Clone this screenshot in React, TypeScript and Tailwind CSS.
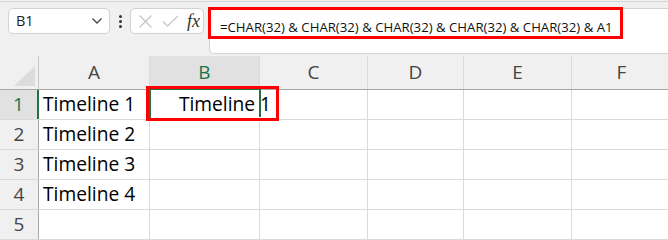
import React from "react";

const cols = ["A", "B", "C", "D", "E", "F"];
const widths = [111, 110, 108, 96, 108, 100];
const data: Record<string, string> = {
  A1: "Timeline 1",
  A2: "Timeline 2",
  A3: "Timeline 3",
  A4: "Timeline 4",
  B1: "     Timeline 1",
};

export default function App() {
  const font = { fontFamily: '"Open Sans", "Noto Sans", sans-serif' };
  return (
    <div
      className="relative w-[668px] h-[240px] overflow-hidden bg-[#f0f0f0]"
      style={font}
    >
      {/* toolbar */}
      <div className="h-[55px] border-t border-[#d6d6d6] mt-[1px] flex items-start pt-[6px] pl-[8px]">
        <div className="w-[102px] h-[26px] rounded-[5px] border border-[#d2d2d2] bg-white flex items-center justify-between pl-[7px] pr-[6px]">
          <span className="text-[14.5px] text-[#222]">B1</span>
          <svg width="12" height="8" viewBox="0 0 12 8">
            <path d="M1.5 1.5 L6 6 L10.5 1.5" fill="none" stroke="#444" strokeWidth="1.3" />
          </svg>
        </div>
        <div className="w-[20px] h-[26px] flex flex-col items-center justify-center gap-[2px]">
          <div className="w-[3px] h-[3px] rounded-full bg-[#333]" />
          <div className="w-[3px] h-[3px] rounded-full bg-[#333]" />
          <div className="w-[3px] h-[3px] rounded-full bg-[#333]" />
        </div>
        <div className="w-[74px] h-[26px] rounded-[5px] border border-[#d2d2d2] bg-white flex items-center pl-[6px]">
          <svg width="15" height="15" viewBox="0 0 15 15" className="ml-[1px]">
            <path d="M1.5 1.5 L13.5 13.5 M13.5 1.5 L1.5 13.5" stroke="#c4c4c4" strokeWidth="1.2" />
          </svg>
          <svg width="17" height="14" viewBox="0 0 17 14" className="ml-[9px]">
            <path d="M1 7.5 L5.5 12 L16 2" fill="none" stroke="#c4c4c4" strokeWidth="1.2" />
          </svg>
          <span
            className="ml-[8px] text-[18px] italic text-[#333] leading-none"
            style={{ fontFamily: '"Liberation Serif", "DejaVu Serif", serif' }}
          >
            fx
          </span>
        </div>
        <div className="ml-[5px] flex-1 h-[46px] rounded-l-[5px] border border-r-0 border-[#d2d2d2] bg-white pl-[10px] pt-[5px]">
          <span className="text-[13.2px] text-[#111] whitespace-pre">
            =CHAR(32) &amp; CHAR(32) &amp; CHAR(32) &amp; CHAR(32) &amp; CHAR(32) &amp; A1
          </span>
        </div>
      </div>

      {/* grid */}
      <div className="flex flex-col">
        {/* header row */}
        <div className="flex h-[34px] border-b border-[#a6a6a6]">
          <div className="w-[39px] shrink-0 border-r border-[#c8c8c8] relative flex items-end justify-end pr-[3px] pb-[3px]">
            <svg width="21" height="20" viewBox="0 0 21 20">
              <path d="M21 0 L21 20 L0 20 Z" fill="#dcdcdc" />
            </svg>
          </div>
          {cols.map((c, i) => (
            <div
              key={c}
              className={
                "shrink-0 flex items-center justify-center text-[19px] border-r border-[#dadada] " +
                (c === "B" ? "bg-[#e1e1e1] text-[#217346]" : "text-[#444]")
              }
              style={{ width: widths[i] }}
            >
              {c}
            </div>
          ))}
        </div>
        {[1, 2, 3, 4, 5].map((r) => (
          <div key={r} className="flex h-[30px] border-b border-[#dadada]">
            <div
              className={
                "w-[39px] shrink-0 flex items-center justify-center text-[19px] " +
                (r === 1
                  ? "bg-[#e1e1e1] text-[#217346] border-r-2 border-[#217346]"
                  : "text-[#444] border-r border-[#a6a6a6]")
              }
            >
              {r}
            </div>
            {cols.map((c, i) => {
              const v = data[c + r];
              return (
                <div
                  key={c}
                  className={
                    "shrink-0 bg-white border-r border-[#dadada] flex items-center pl-[4px] text-[19.2px] text-black whitespace-pre overflow-visible " +
                    (c === "B" && r === 1 ? "relative z-10 bg-transparent" : "")
                  }
                  style={{ width: widths[i] }}
                >
                  {v}
                </div>
              );
            })}
          </div>
        ))}
      </div>

      {/* selection of B1 */}
      <div className="absolute left-[149px] top-[88px] w-[112px] h-[32px] border-2 border-[#217346] z-20 pointer-events-none" />
      <div className="absolute left-[258px] top-[117px] w-[5px] h-[5px] bg-[#217346] border border-white z-20" />

      {/* red annotation boxes */}
      <div className="absolute left-[208px] top-[7px] w-[415px] h-[32px] border-[3px] border-[#f00] z-30" />
      <div className="absolute left-[146px] top-[86px] w-[133px] h-[35px] border-[3px] border-[#f00] z-30" />
    </div>
  );
}
